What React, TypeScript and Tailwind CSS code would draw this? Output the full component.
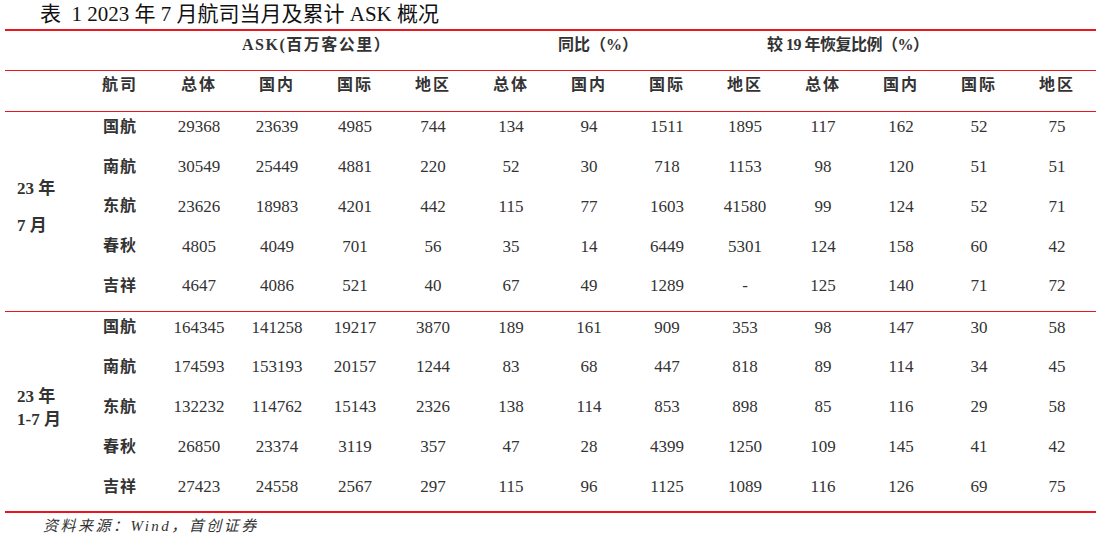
const block1 = [
  ['国航', '29368', '23639', '4985', '744', '134', '94', '1511', '1895', '117', '162', '52', '75'],
  ['南航', '30549', '25449', '4881', '220', '52', '30', '718', '1153', '98', '120', '51', '51'],
  ['东航', '23626', '18983', '4201', '442', '115', '77', '1603', '41580', '99', '124', '52', '71'],
  ['春秋', '4805', '4049', '701', '56', '35', '14', '6449', '5301', '124', '158', '60', '42'],
  ['吉祥', '4647', '4086', '521', '40', '67', '49', '1289', '-', '125', '140', '71', '72'],
]

const block2 = [
  ['国航', '164345', '141258', '19217', '3870', '189', '161', '909', '353', '98', '147', '30', '58'],
  ['南航', '174593', '153193', '20157', '1244', '83', '68', '447', '818', '89', '114', '34', '45'],
  ['东航', '132232', '114762', '15143', '2326', '138', '114', '853', '898', '85', '116', '29', '58'],
  ['春秋', '26850', '23374', '3119', '357', '47', '28', '4399', '1250', '109', '145', '41', '42'],
  ['吉祥', '27423', '24558', '2567', '297', '115', '96', '1125', '1089', '116', '126', '69', '75'],
]

const subHeads = ['总体', '国内', '国际', '地区']

function Line() {
  return <div className="h-[1.5px] bg-[#e8161f]" />
}

function Block({ rows, label, leading }: { rows: string[][]; label: string[]; leading: string }) {
  return (
    <div className="grid grid-cols-[75px_80px_repeat(12,78px)] grid-rows-[repeat(5,39.8px)]">
      <div className={`row-span-5 flex flex-col justify-center pb-[8px] pl-[12px] font-bold text-[17px] ${leading}`}>
        {label.map(l => (
          <span key={l}>{l}</span>
        ))}
      </div>
      {rows.map(r =>
        r.map((v, i) => (
          <div
            key={r[0] + i}
            className={`flex items-center justify-center pb-[10px] ${
              i === 0 ? 'font-semibold text-[16px] tracking-[1px]' : 'text-[17px]'
            }`}
          >
            {v}
          </div>
        ))
      )}
    </div>
  )
}

export default function App() {
  return (
    <div className="w-[1101px] h-[538px] bg-white text-[#333] font-['Liberation_Serif','Noto_Sans_CJK_SC',serif]">
      <div className="h-[29px] pl-[40px] flex items-center text-[21px] text-[#111] whitespace-pre">
        表  1 2023 年 7 月航司当月及累计 ASK 概况
      </div>
      <div className="ml-[5px] w-[1091px]">
        <Line />
        {/* group headings sit off-centre in the source, so they get their own columns */}
        <div className="grid grid-cols-[237px_316px_209px_1fr] h-[39px] font-bold text-[16px] whitespace-nowrap">
          <div />
          <div className="flex items-center pb-[10px] tracking-[1.5px]">ASK(百万客公里）</div>
          <div className="flex items-center pb-[10px]">同比（%）</div>
          <div className="flex items-center pb-[10px] tracking-[-0.5px]">较 19 年恢复比例（%）</div>
        </div>
        <Line />
        <div className="grid grid-cols-[75px_80px_repeat(12,78px)] h-[39.5px] font-semibold text-[16px] tracking-[2px]">
          <div />
          <div className="flex items-center justify-center pb-[12px]">航司</div>
          {[0, 1, 2].flatMap(g =>
            subHeads.map(h => (
              <div key={g + h} className="flex items-center justify-center pb-[12px]">
                {h}
              </div>
            ))
          )}
        </div>
        <Line />
        <Block rows={block1} label={['23 年', '7 月']} leading="leading-[37px]" />
        <Line />
        <Block rows={block2} label={['23 年', '1-7 月']} leading="leading-[23px]" />
        <Line />
        <div className="h-[26px] pl-[38px] flex items-center italic text-[15px] tracking-[2.5px]">
          资料来源：Wind，首创证券
        </div>
      </div>
    </div>
  )
}
